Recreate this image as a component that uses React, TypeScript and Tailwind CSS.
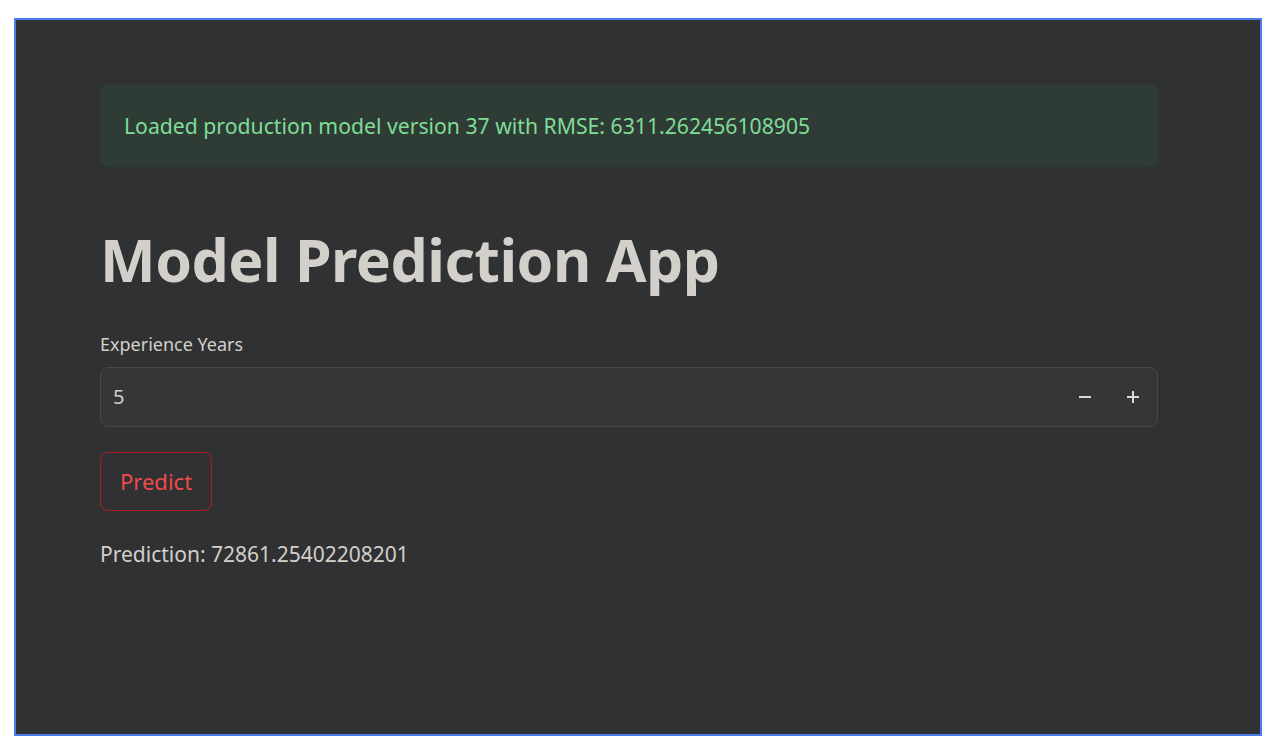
import React, { useState } from 'react';

const font = { fontFamily: '"Noto Sans", "Open Sans", sans-serif' };

export default function App() {
  const [years, setYears] = useState(5);

  return (
    <div className="min-h-screen bg-white pt-[18px] pl-[14px] pr-[16px]" style={font}>
      <div className="h-[718px] bg-[#303133] border-2 border-[#4a7cf0] px-[84px] pt-[64px]">
        {/* success alert */}
        <div className="w-[1058px] h-[83px] rounded-lg bg-[#2f3c35] px-6 flex items-center">
          <span className="text-[21.2px] leading-[28px] text-[#7edc97]">Loaded production model version 37 with RMSE: 6311.262456108905</span>
        </div>

        <h1 className="mt-[63px] text-[59px] font-bold leading-none text-[#d3cfca] tracking-[-0.5px]">Model Prediction App</h1>

        <label className="block mt-[43px] text-[18px] leading-[24px] text-[#d3cfca]">Experience Years</label>
        <div className="mt-[11px] w-[1058px] h-[60px] rounded-lg bg-[#353638] border border-[#47484b] flex items-center pl-3 pr-2">
          <span className="flex-1 text-[20px] text-[#d3cfca]">{years}</span>
          <button className="w-8 h-10 flex items-center justify-center" onClick={() => setYears(years - 1)}>
            <span className="block w-3 h-[2px] bg-[#dcd8d2]" />
          </button>
          <button className="ml-4 w-8 h-10 flex items-center justify-center relative" onClick={() => setYears(years + 1)}>
            <span className="block w-3 h-[2px] bg-[#dcd8d2]" />
            <span className="absolute w-[2px] h-3 bg-[#dcd8d2]" />
          </button>
        </div>

        <button className="mt-[25px] h-[59px] px-[19px] rounded-lg border border-[#b01c1e] text-[22px] text-[#f04a4a]">Predict</button>

        <p className="mt-[29px] text-[21px] leading-[28px] text-[#d3cfca]">Prediction: 72861.25402208201</p>
      </div>
    </div>
  );
}
